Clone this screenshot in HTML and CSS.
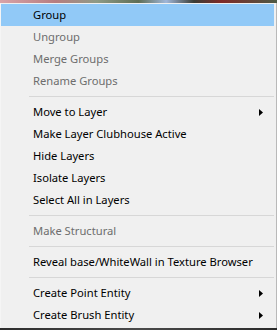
FILE: index.html
```html
<!DOCTYPE html>
<html lang="en">
<head>
<meta charset="UTF-8">
<title>Context menu</title>
<link rel="stylesheet" href="styles.css">
</head>
<body>
    <div class="desktop-top"></div>
    <div class="menu">
        <div class="item active">Group</div>
        <div class="item disabled">Ungroup</div>
        <div class="item disabled">Merge Groups</div>
        <div class="item disabled">Rename Groups</div>
        <div class="sep"></div>
        <div class="item sub">Move to Layer
            <svg class="arrow" width="4" height="7" viewBox="0 0 4 7"><polygon points="0,0 4,3.5 0,7" fill="#000"/></svg>
        </div>
        <div class="item">Make Layer Clubhouse Active</div>
        <div class="item">Hide Layers</div>
        <div class="item">Isolate Layers</div>
        <div class="item">Select All in Layers</div>
        <div class="sep"></div>
        <div class="item disabled">Make Structural</div>
        <div class="sep"></div>
        <div class="item">Reveal base/WhiteWall in Texture Browser</div>
        <div class="sep"></div>
        <div class="item sub">Create Point Entity
            <svg class="arrow" width="4" height="7" viewBox="0 0 4 7"><polygon points="0,0 4,3.5 0,7" fill="#000"/></svg>
        </div>
        <div class="item sub">Create Brush Entity
            <svg class="arrow" width="4" height="7" viewBox="0 0 4 7"><polygon points="0,0 4,3.5 0,7" fill="#000"/></svg>
        </div>
    </div>
    <div class="desktop-bottom"></div>
</body>
</html>
```

FILE: styles.css
```css
body {
    margin: 0;
    padding: 0;
    width: 277px;
    height: 330px;
    overflow: hidden;
    background: #3a3a3a;
    font-family: "Noto Sans", sans-serif;
    font-size: 11.2px;
}

.desktop-top {
    height: 3px;
    background: linear-gradient(90deg, #d9a3a8, #b77d80 20%, #8e9a86 35%, #5f6e55 50%, #9fb6d8 60%, #3b3d36 70%, #7f2a28 80%, #4d5a45 100%);
}

.menu {
    width: 273px;
    padding: 1px 2px 2px 0;
    background: #f0f0f0;
    border-right: 2px solid #b9b9b9;
    border-left: 1px solid #f5f5f5;
}

.item {
    display: flex;
    align-items: center;
    height: 22px;
    line-height: 22px;
    padding-left: 32px;
    padding-right: 11px;
    color: #000;
    white-space: nowrap;
}

.item.active {
    background: #91c9f7;
}

.item.disabled {
    color: #6d6d6d;
}

.arrow {
    margin-left: auto;
}

.sep {
    height: 1px;
    margin: 4px 0 4px 28px;
    background: #d7d7d7;
}

.desktop-bottom {
    height: 2px;
    background: linear-gradient(90deg, #2d2d2d, #4a4a4a 50%, #2a2a2a);
}
```
